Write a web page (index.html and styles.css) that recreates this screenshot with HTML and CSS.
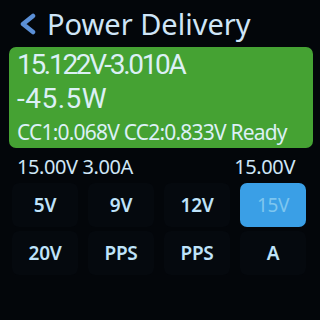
FILE: index.html
```html
<!DOCTYPE html>
<html>
<head>
<meta charset="utf-8">
<link rel="stylesheet" href="styles.css">
</head>
<body>
<div class="screen">
  <div class="header">
    <svg class="back" width="20" height="22" viewBox="0 0 20 22"><path d="M15 3 L5 11 L15 19" fill="none" stroke="#5b8fd6" stroke-width="4.5" stroke-linecap="round" stroke-linejoin="round"/></svg>
    <span class="title">Power Delivery</span>
  </div>
  <div class="meter">
    <div class="big first">15.122V-3.010A</div>
    <div class="big second">-45.5W</div>
    <div class="cc">CC1:0.068V CC2:0.833V Ready</div>
  </div>
  <div class="status">
    <span>15.00V 3.00A</span>
    <span>15.00V</span>
  </div>
  <div class="grid">
    <div class="btn">5V</div>
    <div class="btn">9V</div>
    <div class="btn">12V</div>
    <div class="btn active">15V</div>
    <div class="btn">20V</div>
    <div class="btn">PPS</div>
    <div class="btn">PPS</div>
    <div class="btn">A</div>
  </div>
</div>
</body>
</html>
```
FILE: styles.css
```css
html, body {
  margin: 0;
  padding: 0;
  background: #03060a;
}
.screen {
  width: 320px;
  height: 320px;
  overflow: hidden;
  font-family: "Noto Sans", "Open Sans", sans-serif;
  color: #d6ecf8;
}
.header {
  display: flex;
  align-items: center;
  height: 46px;
  padding-left: 18px;
  gap: 9px;
}
.back {
  margin-top: 2px;
}
.title {
  font-size: 29px;
  color: #cfe5f7;
  letter-spacing: 0;
}
.meter {
  margin: 1px 7px 0 9px;
  height: 101px;
  background: #45a233;
  border-radius: 7px;
  padding: 0 8px;
  box-sizing: border-box;
}
.big {
  font-family: Roboto, "Noto Sans", sans-serif;
  font-size: 28px;
  line-height: 34px;
  color: #dcf0f6;
}
.big.first {
  padding-top: 1px;
  letter-spacing: -2.3px;
}
.big.second {
  letter-spacing: 0.5px;
}
.cc {
  font-size: 21px;
  line-height: 30px;
  margin-top: 1px;
  letter-spacing: -0.8px;
  color: #dcf0f6;
}
.status {
  display: flex;
  justify-content: space-between;
  padding: 7px 25px 0 17px;
  font-size: 20px;
  line-height: 24px;
  letter-spacing: -0.4px;
  color: #cfe6f7;
}
.grid {
  display: grid;
  grid-template-columns: repeat(4, 66px);
  grid-auto-rows: 44px;
  column-gap: 10px;
  row-gap: 4px;
  padding: 4px 0 0 12px;
}
.btn {
  display: flex;
  align-items: center;
  justify-content: center;
  border-radius: 7px;
  background: #05090e;
  font-size: 19px;
  font-weight: 600;
  color: #bfe3fa;
  letter-spacing: -0.3px;
}
.btn.active {
  background: #3a9fe6;
  color: #7ec6ef;
  font-weight: 400;
}
```
